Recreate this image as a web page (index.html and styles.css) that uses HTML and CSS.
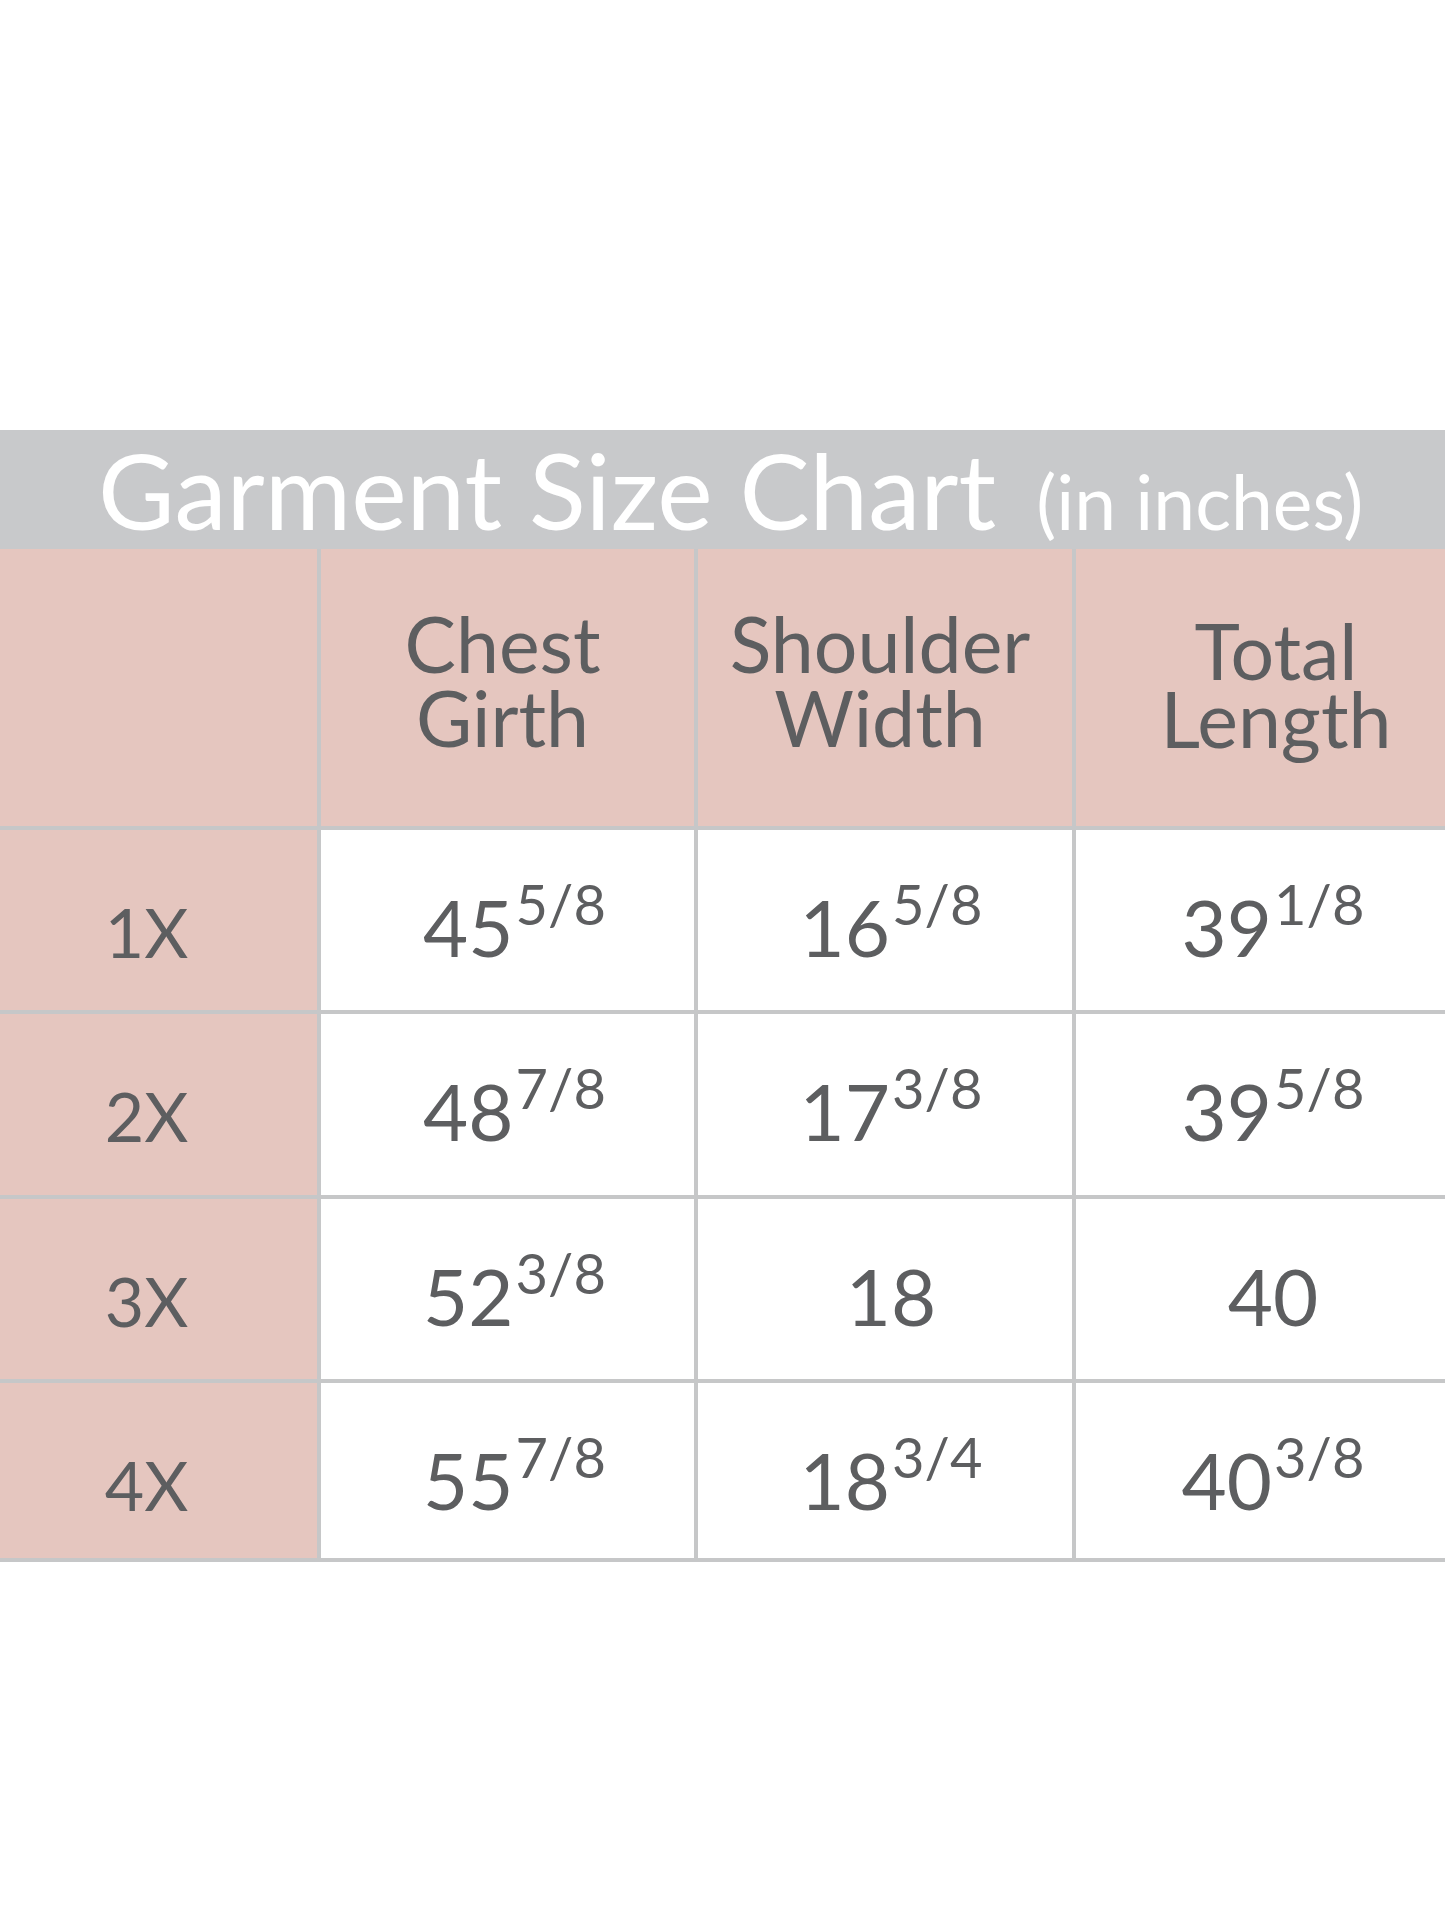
FILE: index.html
```html
<!DOCTYPE html>
<html lang="en">
<head>
<meta charset="utf-8">
<title>Garment Size Chart</title>
<link rel="stylesheet" href="styles.css">
</head>
<body>
<main class="page">
  <section class="chart">
    <header class="chart-title">
      <span class="title-main">Garment Size Chart</span>
      <span class="title-unit">(in inches)</span>
    </header>
    <div class="grid">
      <div class="cell head corner"></div>
      <div class="cell head col2">Chest<br>Girth</div>
      <div class="cell head col3">Shoulder<br>Width</div>
      <div class="cell head col4 tight">Total<br>Length</div>

      <div class="cell size">1X</div>
      <div class="cell val col2"><span class="num">45<sup>5/8</sup></span></div>
      <div class="cell val col3"><span class="num">16<sup>5/8</sup></span></div>
      <div class="cell val col4"><span class="num">39<sup>1/8</sup></span></div>

      <div class="cell size">2X</div>
      <div class="cell val col2"><span class="num">48<sup>7/8</sup></span></div>
      <div class="cell val col3"><span class="num">17<sup>3/8</sup></span></div>
      <div class="cell val col4"><span class="num">39<sup>5/8</sup></span></div>

      <div class="cell size">3X</div>
      <div class="cell val col2"><span class="num">52<sup>3/8</sup></span></div>
      <div class="cell val col3"><span class="num">18</span></div>
      <div class="cell val col4"><span class="num">40</span></div>

      <div class="cell size">4X</div>
      <div class="cell val col2"><span class="num">55<sup>7/8</sup></span></div>
      <div class="cell val col3"><span class="num">18<sup>3/4</sup></span></div>
      <div class="cell val col4"><span class="num">40<sup>3/8</sup></span></div>
    </div>
  </section>
</main>
</body>
</html>
```
FILE: styles.css
```css
html, body {
  margin: 0;
  padding: 0;
  background: #ffffff;
  overflow: hidden;
}

.page {
  width: 1445px;
  height: 1927px;
  overflow: hidden;
  font-family: "Lato", "Open Sans", "Liberation Sans", sans-serif;
  color: #5d5e60;
}

.chart {
  margin-top: 430px;
  width: 1470px;
}

.chart-title {
  display: flex;
  align-items: baseline;
  height: 119px;
  padding-left: 98px;
  background: #c8c9cb;
  color: #ffffff;
}

.title-main {
  font-size: 105px;
  line-height: 119px;
  white-space: nowrap;
}

.title-unit {
  font-size: 75px;
  line-height: 119px;
  margin-left: 40px;
  white-space: nowrap;
}

.grid {
  display: grid;
  grid-template-columns: 317px 373px 374px 394px;
  grid-template-rows: 277px 180px 181px 180px 175px;
  gap: 4px;
  padding-bottom: 4px;
  background: #c6c7c8;
}

.cell {
  display: flex;
  justify-content: center;
  background: #ffffff;
}

.head {
  align-items: center;
  text-align: center;
  background: #e5c6bf;
  font-size: 77px;
  line-height: 74px;
  padding-bottom: 16px;
}

.head.tight {
  line-height: 68px;
  padding-bottom: 8px;
}

.head.col2 { padding-right: 10px; }
.head.col3 { padding-right: 10px; }
.head.col4 { padding-left: 6px; }

.size {
  align-items: flex-start;
  background: #e5c6bf;
  font-size: 68px;
  line-height: 68px;
  padding-top: 68px;
  padding-right: 24px;
}

.val {
  align-items: flex-start;
  font-size: 78px;
  line-height: 78px;
  padding-top: 58px;
}

.val.col2 { padding-left: 14px; }
.val.col3 { padding-left: 12px; }
.val.col4 { padding-left: 0; }

.num {
  white-space: nowrap;
}

.num sup {
  font-size: 56px;
  line-height: 0;
  vertical-align: 32px;
  margin-left: 2px;
}
```
